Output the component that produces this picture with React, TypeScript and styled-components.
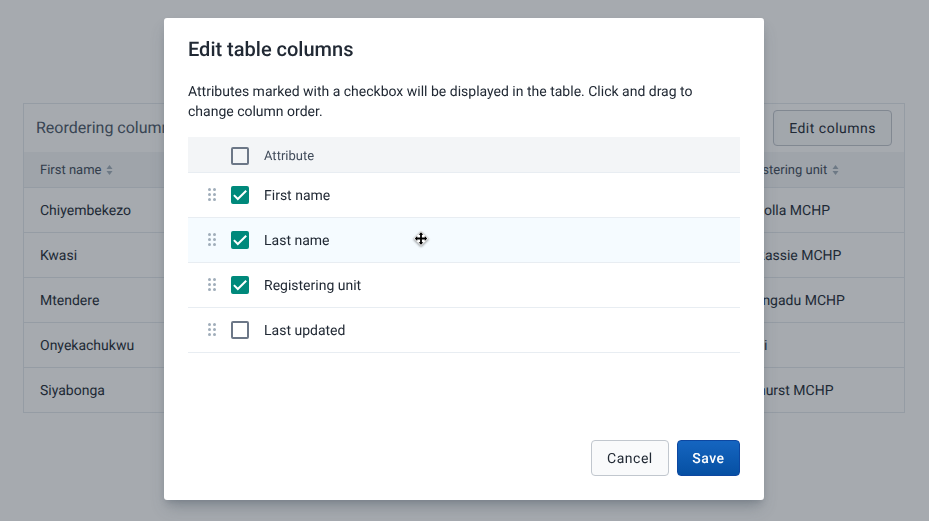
import React from 'react';
import styled, { createGlobalStyle } from 'styled-components';

const GlobalStyle = createGlobalStyle`
  *, *::before, *::after { box-sizing: border-box; }
  body {
    margin: 0;
    background: #fff;
    color: #212934;
    font: 400 14px/20px Roboto, "Liberation Sans", sans-serif;
    text-rendering: geometricPrecision;
    overflow: hidden;
  }
`;

const Page = styled.main`
  height: 521px;
  padding: 103px 24px 0 23px;
`;

const DataTable = styled.section`
  border: 1px solid #e3e8ed;
`;

const Toolbar = styled.header`
  display: flex;
  align-items: center;
  justify-content: space-between;
  height: 48px;
  padding: 0 12px;
`;

const ToolbarTitle = styled.h2`
  margin: 0;
  color: #4a5768;
  font-size: 16px;
  font-weight: 400;
`;

const Button = styled.button<{ $primary?: boolean }>`
  height: 36px;
  padding: 2px ${(p) => (p.$primary ? 14.5 : 15)}px 0;
  border: 1px solid ${(p) => (p.$primary ? '#0d47a1' : '#c1c7ce')};
  border-radius: 4px;
  background: ${(p) => (p.$primary ? 'linear-gradient(180deg, #1565c0 0%, #0650a3 100%)' : '#f9fafb')};
  color: ${(p) => (p.$primary ? '#fff' : '#212934')};
  font: ${(p) => (p.$primary ? 500 : 400)} 14px/16px Roboto, "Liberation Sans", sans-serif;
  letter-spacing: 0.5px;
  text-rendering: inherit;
`;

const Text = styled.span`
  padding-top: 2px;
`;

const DataRow = styled.div<{ $head?: boolean }>`
  display: grid;
  grid-template-columns: 697px 1fr;
  align-items: center;
  height: ${(p) => (p.$head ? 36 : 45)}px;
  padding: 0 16px;
  border-bottom: 1px solid #e3e8ed;
  background: ${(p) => (p.$head ? '#f3f5f7' : '#fff')};
  color: ${(p) => (p.$head ? '#404b5a' : '#212934')};
  font-size: ${(p) => (p.$head ? 13 : 14)}px;

  &:last-child { border-bottom: 0; height: 44px; }
`;

const HeadCell = styled.span`
  display: flex;
  align-items: center;
  gap: 5px;
`;

const Backdrop = styled.div`
  position: fixed;
  inset: 0;
  display: flex;
  align-items: flex-start;
  justify-content: center;
  padding: 18px 1px 0 0;
  background: rgba(33, 43, 54, 0.4);
`;

const Modal = styled.section`
  display: flex;
  flex-direction: column;
  width: 600px;
  height: 482px;
  padding: 17px 24px 24px;
  border-radius: 3px;
  background: #fff;
  box-shadow: 0 10px 15px -3px rgba(64, 75, 90, 0.3), 0 4px 6px -2px rgba(64, 75, 90, 0.25);
`;

const ModalTitle = styled.h1`
  margin: 0 0 19px;
  font-size: 20px;
  font-weight: 500;
  line-height: 28px;
`;

const Description = styled.p`
  margin: 0 0 15px;
`;

const AttributeRow = styled.div<{ $head?: boolean; $hovered?: boolean }>`
  display: grid;
  grid-template-columns: 27px 18px 1fr;
  column-gap: 15px;
  align-items: center;
  height: ${(p) => (p.$head ? 36 : 45)}px;
  padding: ${(p) => (p.$head ? 3 : 0)}px 0 0 1px;
  border-bottom: 1px solid #e8edf2;
  background: ${(p) => (p.$head ? '#f3f5f7' : p.$hovered ? '#f5fbff' : '#fff')};
  color: ${(p) => (p.$head ? '#404b5a' : '#212934')};
  font-size: ${(p) => (p.$head ? 13 : 14)}px;
`;

const Grip = styled.svg`
  display: block;
  justify-self: end;
`;

const Box = styled.span<{ $checked?: boolean }>`
  display: grid;
  place-items: center;
  width: 18px;
  height: 18px;
  border: 2px solid ${(p) => (p.$checked ? '#00897b' : '#6c7787')};
  border-radius: 2px;
  background: ${(p) => (p.$checked ? '#00897b' : 'transparent')};
`;

const Actions = styled.footer`
  display: flex;
  justify-content: flex-end;
  gap: 8px;
  margin-top: auto;
`;

const Pointer = styled.svg`
  position: fixed;
  left: 411px;
  top: 229px;
  filter: drop-shadow(0 1px 1px rgba(0, 0, 0, 0.4));
`;

const SortIcon = () => (
  <svg width="7" height="10" viewBox="0 0 7 10" fill="#a0adba">
    <path d="M3.5 0 6.5 4H.5zM3.5 10 6.5 6H.5z" />
  </svg>
);

const GripIcon = () => (
  <Grip width="9" height="14" viewBox="-0.5 0.5 9 14" fill="#a0adba">
    {[2, 7, 12].map((y) => (
      <React.Fragment key={y}>
        <circle cx="2" cy={y} r="1.5" />
        <circle cx="7" cy={y} r="1.5" />
      </React.Fragment>
    ))}
  </Grip>
);

const Checkbox = ({ checked }: { checked?: boolean }) => (
  <Box $checked={checked}>
    {checked && (
      <svg width="14" height="14" viewBox="0 0 14 14" fill="none" stroke="#fff" strokeWidth="2">
        <path d="M.9 7.1 4.8 11 13.2 2.7" />
      </svg>
    )}
  </Box>
);

const MoveCursor = () => (
  <Pointer width="20" height="20" viewBox="0 0 20 20">
    <path d="M10 2.2 17.3 9.5 10 16.8 2.7 9.5z" fill="#fff" stroke="#d0d0d0" strokeWidth=".7" />
    <path d="M10 5v9M5.5 9.5h9" stroke="#000" strokeWidth="1.8" />
    <path d="M10 3.3 12.4 5.7H7.6zM10 15.7 12.4 13.3H7.6zM3.8 9.5 6.2 7.1v4.8zM16.2 9.5 13.8 7.1v4.8z" fill="#000" />
  </Pointer>
);

const people = [
  ['Chiyembekezo', 'Makolla MCHP'],
  ['Kwasi', 'Gbikassie MCHP'],
  ['Mtendere', 'Gbongadu MCHP'],
  ['Onyekachukwu', 'Masi'],
  ['Siyabonga', 'Bathurst MCHP'],
];

const attributes = [
  { name: 'First name', checked: true },
  { name: 'Last name', checked: true, hovered: true },
  { name: 'Registering unit', checked: true },
  { name: 'Last updated', checked: false },
];

export default function App() {
  return (
    <>
      <GlobalStyle />
      <Page>
        <DataTable>
          <Toolbar>
            <ToolbarTitle>Reordering columns</ToolbarTitle>
            <Button>Edit columns</Button>
          </Toolbar>
          <DataRow $head>
            <HeadCell><Text>First name</Text><SortIcon /></HeadCell>
            <HeadCell><Text>Registering unit</Text><SortIcon /></HeadCell>
          </DataRow>
          {people.map(([name, unit]) => (
            <DataRow key={name}>
              <Text>{name}</Text>
              <Text>{unit}</Text>
            </DataRow>
          ))}
        </DataTable>
      </Page>
      <Backdrop>
        <Modal role="dialog" aria-modal="true">
          <ModalTitle>Edit table columns</ModalTitle>
          <Description>
            Attributes marked with a checkbox will be displayed in the table. Click and drag to change column order.
          </Description>
          <div>
            <AttributeRow $head>
              <span />
              <Checkbox />
              <Text>Attribute</Text>
            </AttributeRow>
            {attributes.map((a) => (
              <AttributeRow key={a.name} $hovered={a.hovered}>
                <GripIcon />
                <Checkbox checked={a.checked} />
                <Text>{a.name}</Text>
              </AttributeRow>
            ))}
          </div>
          <Actions>
            <Button>Cancel</Button>
            <Button $primary>Save</Button>
          </Actions>
        </Modal>
      </Backdrop>
      <MoveCursor />
    </>
  );
}
